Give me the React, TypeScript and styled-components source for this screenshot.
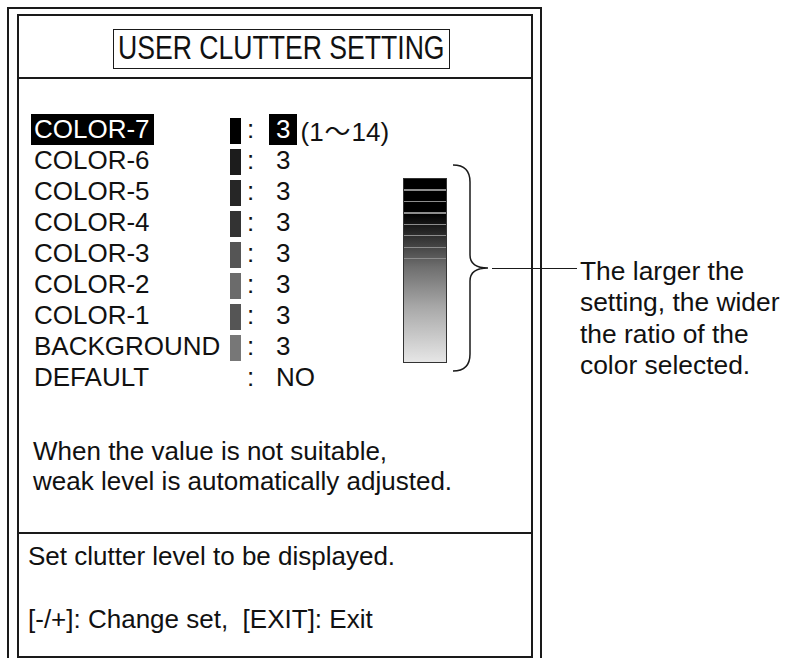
import styled, { createGlobalStyle } from "styled-components";

const ink = "#1a1a1a";

const GlobalStyle = createGlobalStyle`
  html, body {
    margin: 0;
    padding: 0;
    background: #fff;
  }
  body {
    font-family: "Liberation Sans", Arial, Helvetica, sans-serif;
    color: #111;
  }
`;

const Page = styled.div`
  position: relative;
  width: 790px;
  height: 658px;
  overflow: hidden;
  background: #fff;
`;

const OuterFrame = styled.div`
  box-sizing: border-box;
  margin: 7px 0 0 7px;
  width: 535px;
  height: 651px;
  padding: 5px 7px 0 8px;
  border: 2px solid ${ink};
  border-bottom: none;
`;

const Screen = styled.div`
  box-sizing: border-box;
  height: 644px;
  border: 2px solid ${ink};
  display: flex;
  flex-direction: column;
`;

const TitleBar = styled.div`
  box-sizing: border-box;
  height: 63px;
  padding: 13px 0 0 94px;
  border-bottom: 2px solid ${ink};
`;

const Title = styled.div`
  display: inline-block;
  box-sizing: border-box;
  height: 40px;
  padding: 0 4px;
  border: 1.5px solid ${ink};
  font-size: 26.6px;
  line-height: 37px;
  white-space: nowrap;
`;

// the title lettering in the panel is drawn taller than the body text
const TitleText = styled.span`
  display: inline-block;
  transform: scaleY(1.25);
`;

const Main = styled.div`
  box-sizing: border-box;
  height: 455px;
  padding: 35px 0 0 12px;
  border-bottom: 2px solid ${ink};
`;

const Settings = styled.div`
  display: flex;
  align-items: flex-start;
`;

const Rows = styled.div`
  flex: none;
  width: 372px;
  display: flex;
  flex-direction: column;
`;

const Row = styled.div`
  display: flex;
  height: 31px;
  font-size: 26px;
  line-height: 31px;
  white-space: nowrap;
`;

const LabelCell = styled.div`
  flex: none;
  width: 197px;
`;

const Label = styled.span<{ $active?: boolean }>`
  display: inline-block;
  padding: 0 4px 0 3px;
  background: ${(p) => (p.$active ? "#000" : "transparent")};
  color: ${(p) => (p.$active ? "#fff" : "#111")};
`;

const Swatch = styled.div<{ $color: string }>`
  flex: none;
  align-self: flex-end;
  width: 11px;
  height: 26px;
  margin: 0 0 1px 2px;
  background: ${(p) => p.$color};
`;

const Colon = styled.span`
  flex: none;
  width: 22px;
  padding-left: 6px;
`;

const Value = styled.span<{ $active?: boolean }>`
  display: inline-block;
  padding: 0 7px;
  background: ${(p) => (p.$active ? "#000" : "transparent")};
  color: ${(p) => (p.$active ? "#fff" : "#111")};
`;

const Range = styled.span`
  margin-left: 3px;
`;

const Wave = styled.span`
  margin: 0 1px;
  font-family: "Noto Sans CJK JP", "DejaVu Sans", sans-serif;
  font-size: 26px;
`;

const Scale = styled.div`
  display: flex;
  align-items: flex-start;
`;

const Bar = styled.div`
  box-sizing: border-box;
  width: 44px;
  height: 185px;
  margin-top: 64px;
  border: 1.5px solid #333;
  background:
    repeating-linear-gradient(
        to bottom,
        transparent 0 10px,
        #8c8c8c 10px 11.5px
      )
      top / 100% 82px no-repeat,
    linear-gradient(
      to bottom,
      #000 0%,
      #000 19%,
      #3a3a3a 34%,
      #6e6e6e 48%,
      #a8a8a8 70%,
      #e6e6e6 100%
    );
`;

const Brace = styled.svg`
  flex: none;
  margin: 50px 0 0 5px;
`;

const Note = styled.div`
  margin-top: 43px;
  padding-left: 2px;
  font-size: 26px;
  line-height: 30px;
`;

const Footer = styled.div`
  flex: 1;
  padding: 7px 0 0 9px;
  font-size: 26px;
  line-height: 30px;
`;

const FooterLine = styled.div<{ $gap?: number }>`
  margin-top: ${(p) => p.$gap ?? 0}px;
  white-space: nowrap;
`;

const Callout = styled.div`
  position: absolute;
  left: 492px;
  top: 256px;
  display: flex;
  align-items: flex-start;
`;

const Leader = styled.div`
  flex: none;
  width: 85px;
  height: 1.5px;
  margin-top: 11.5px;
  background: ${ink};
`;

const CalloutText = styled.div`
  margin-left: 3px;
  font-size: 26.4px;
  line-height: 31.3px;
  white-space: nowrap;
`;

type Setting = { label: string; swatch?: string; value: string };

const settings: Setting[] = [
  { label: "COLOR-7", swatch: "#000", value: "3" },
  { label: "COLOR-6", swatch: "#1c1c1c", value: "3" },
  { label: "COLOR-5", swatch: "#262626", value: "3" },
  { label: "COLOR-4", swatch: "#333", value: "3" },
  { label: "COLOR-3", swatch: "#555", value: "3" },
  { label: "COLOR-2", swatch: "#6b6b6b", value: "3" },
  { label: "COLOR-1", swatch: "#555", value: "3" },
  { label: "BACKGROUND", swatch: "#777", value: "3" },
  { label: "DEFAULT", value: "NO" },
];

export default function App() {
  return (
    <>
      <GlobalStyle />
      <Page>
        <OuterFrame>
          <Screen>
            <TitleBar>
              <Title>
                <TitleText>USER CLUTTER SETTING</TitleText>
              </Title>
            </TitleBar>
            <Main>
              <Settings>
                <Rows>
                  {settings.map((s, i) => (
                    <Row key={s.label}>
                      <LabelCell>
                        <Label $active={i === 0}>{s.label}</Label>
                      </LabelCell>
                      <Swatch $color={s.swatch ?? "transparent"} />
                      <Colon>:</Colon>
                      <Value $active={i === 0}>{s.value}</Value>
                      {i === 0 && (
                        <Range>
                          (1<Wave>～</Wave>14)
                        </Range>
                      )}
                    </Row>
                  ))}
                </Rows>
                <Scale>
                  <Bar />
                  <Brace width="40" height="210" viewBox="0 0 40 210">
                    <path
                      d="M1,1 Q18,1 18,18 L18,91 Q18,104 36,104 Q18,104 18,117 L18,190 Q18,207 1,207"
                      fill="none"
                      stroke={ink}
                      strokeWidth="1.5"
                    />
                  </Brace>
                </Scale>
              </Settings>
              <Note>
                When the value is not suitable,
                <br />
                weak level is automatically adjusted.
              </Note>
            </Main>
            <Footer>
              <FooterLine>Set clutter level to be displayed.</FooterLine>
              <FooterLine $gap={33}>[-/+]: Change set,&nbsp; [EXIT]: Exit</FooterLine>
            </Footer>
          </Screen>
        </OuterFrame>
        <Callout>
          <Leader />
          <CalloutText>
            The larger the
            <br />
            setting, the wider
            <br />
            the ratio of the
            <br />
            color selected.
          </CalloutText>
        </Callout>
      </Page>
    </>
  );
}
